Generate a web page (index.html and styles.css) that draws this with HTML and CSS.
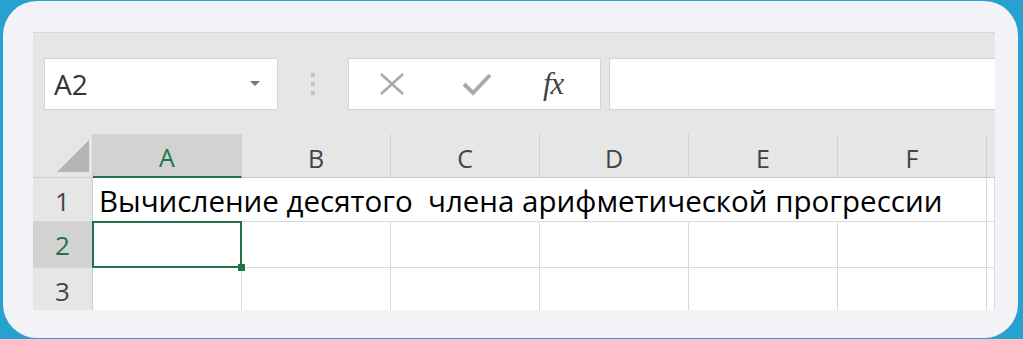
FILE: index.html
```html
<!DOCTYPE html>
<html lang="ru">
<head>
  <meta charset="UTF-8" />
  <title>Арифметическая прогрессия</title>
  <link rel="stylesheet" href="styles.css">
</head>
<body>
  <div class="card">
    <div class="sheet">
      <div class="formula-bar">
        <div class="name-box">
          <span>A2</span>
          <span class="caret"></span>
        </div>
        <div class="grip"><i></i><i></i><i></i></div>
        <div class="fx-buttons">
          <svg class="ico" width="26" height="24" viewBox="0 0 26 24">
            <path d="M2 2 L24 22 M24 2 L2 22" stroke="#a9a9a9" stroke-width="2.4" fill="none"/>
          </svg>
          <svg class="ico" width="30" height="24" viewBox="0 0 30 24">
            <path d="M2 12 L11 21 L28 3" stroke="#a9a9a9" stroke-width="4" fill="none"/>
          </svg>
          <span class="fx">fx</span>
        </div>
        <div class="formula-input"></div>
      </div>

      <div class="grid">
        <div class="corner"><span class="tri"></span></div>
        <div class="col-head active">A</div>
        <div class="col-head">B</div>
        <div class="col-head">C</div>
        <div class="col-head">D</div>
        <div class="col-head">E</div>
        <div class="col-head">F</div>
        <div class="col-head last"></div>

        <div class="row-head">1</div>
        <div class="cell spill title">Вычисление десятого&nbsp; члена арифметической прогрессии</div>
        <div class="cell spill"></div>
        <div class="cell spill"></div>
        <div class="cell spill"></div>
        <div class="cell spill"></div>
        <div class="cell"></div>
        <div class="cell"></div>

        <div class="row-head active">2</div>
        <div class="cell selected"><span class="handle"></span></div>
        <div class="cell"></div>
        <div class="cell"></div>
        <div class="cell"></div>
        <div class="cell"></div>
        <div class="cell"></div>
        <div class="cell"></div>

        <div class="row-head">3</div>
        <div class="cell"></div>
        <div class="cell"></div>
        <div class="cell"></div>
        <div class="cell"></div>
        <div class="cell"></div>
        <div class="cell"></div>
        <div class="cell"></div>
      </div>
    </div>
  </div>
</body>
</html>
```

FILE: styles.css
```css
body {
  margin: 0;
  background-color: #27a2cf;
  font-family: 'Open Sans', 'Liberation Sans', sans-serif;
  padding: 1px 5px 1px 3px;
  height: 339px;
  box-sizing: border-box;
  overflow: hidden;
}
.card {
  background-color: #f2f2f7;
  border-radius: 34px;
  height: 337px;
  padding: 31px 0 0 30px;
  box-sizing: border-box;
}
.sheet {
  width: 962px;
  height: 278px;
  background-color: #e6e6e6;
  border-top: 1px solid #d6d6d6;
  box-sizing: border-box;
  overflow: hidden;
}
.formula-bar {
  display: flex;
  align-items: center;
  height: 101px;
  padding-left: 11px;
  box-sizing: border-box;
}
.name-box {
  width: 234px;
  height: 52px;
  background: #fff;
  border: 1px solid #d4d4d4;
  box-sizing: border-box;
  display: flex;
  align-items: center;
  justify-content: space-between;
  padding: 0 17px 0 9px;
  font-size: 28px;
  color: #333;
}
.caret {
  width: 0;
  height: 0;
  border-left: 5px solid transparent;
  border-right: 5px solid transparent;
  border-top: 5px solid #777;
}
.grip {
  width: 70px;
  display: flex;
  flex-direction: column;
  align-items: center;
  gap: 5px;
}
.grip i {
  width: 4px;
  height: 4px;
  background: #c6c6c6;
}
.fx-buttons {
  width: 253px;
  height: 52px;
  background: #fff;
  border: 1px solid #d4d4d4;
  box-sizing: border-box;
  display: flex;
  align-items: center;
  padding-left: 30px;
  gap: 57px;
}
.fx {
  font-family: 'Liberation Serif', serif;
  font-style: italic;
  font-size: 31px;
  color: #444;
  margin-left: -6px;
  letter-spacing: -1px;
}
.formula-input {
  flex: 1;
  height: 52px;
  margin-left: 8px;
  background: #fff;
  border: 1px solid #d4d4d4;
  border-right: none;
  box-sizing: border-box;
}
.grid {
  display: grid;
  grid-template-columns: 60px repeat(6, 149px) 8px;
  grid-template-rows: 44px 44px 46px 44px;
}
.corner {
  border-right: 1px solid #cfcfcf;
  border-bottom: 1px solid #cfcfcf;
  position: relative;
}
.tri {
  position: absolute;
  right: 3px;
  bottom: 5px;
  width: 0;
  height: 0;
  border-left: 32px solid transparent;
  border-bottom: 32px solid #b5b5b5;
}
.col-head {
  font-size: 25px;
  color: #444;
  text-align: center;
  line-height: 48px;
  border-right: 1px solid #d0d0d0;
  border-bottom: 1px solid #c8c8c8;
}
.col-head.active {
  background: #d2d2d2;
  color: #217346;
  border-bottom: 2px solid #217346;
  line-height: 47px;
}
.col-head.last {
  border-right: none;
}
.row-head {
  font-size: 26px;
  color: #444;
  text-align: center;
  line-height: 46px;
  border-right: 1px solid #cfcfcf;
  border-bottom: 1px solid #d6d6d6;
}
.row-head.active {
  background: #d2d2d2;
  color: #217346;
}
.cell {
  background: #fff;
  border-right: 1px solid #dadada;
  border-bottom: 1px solid #dadada;
  position: relative;
}
.cell.spill {
  border-right-color: #fff;
}
.cell.title {
  white-space: nowrap;
  overflow: visible;
  font-size: 29.5px;
  color: #000;
  line-height: 46px;
  padding-left: 6px;
  z-index: 1;
}
.cell.selected {
  border: 2px solid #217346;
  margin: -1px 0 0 -1px;
  z-index: 2;
}
.handle {
  position: absolute;
  right: -5px;
  bottom: -5px;
  width: 7px;
  height: 7px;
  background: #217346;
}
```
